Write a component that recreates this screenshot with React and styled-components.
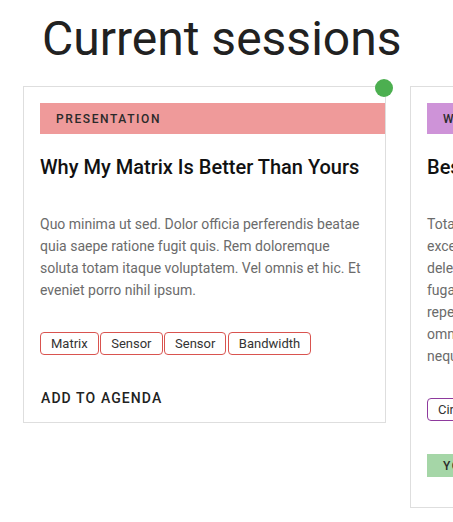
import React from "react";
import styled, { createGlobalStyle } from "styled-components";

const GlobalStyle = createGlobalStyle`
  html, body {
    margin: 0;
    padding: 0;
    background: #ffffff;
    overflow: hidden;
  }
  body {
    font-family: Roboto, "Liberation Sans", Arial, sans-serif;
    color: #212121;
  }
`;

const Page = styled.main`
  padding-top: 11px;
`;

const Heading = styled.h1`
  margin: 0 0 0 42px;
  font-size: 48px;
  line-height: 56px;
  font-weight: 400;
  color: #212121;
  white-space: nowrap;
`;

const Track = styled.section`
  display: flex;
  align-items: flex-start;
  gap: 24px;
  padding: 19px 0 0 23px;
`;

const Card = styled.article`
  position: relative;
  flex: 0 0 363px;
  box-sizing: border-box;
  border: 1px solid #dedede;
  padding: 16px;
  background: #fff;
`;

const Dot = styled.span`
  position: absolute;
  top: -8px;
  right: -8px;
  width: 18px;
  height: 18px;
  border-radius: 50%;
  background: #4caf50;
`;

const Band = styled.div`
  display: flex;
  align-items: center;
  height: 31px;
  margin-right: -16px;
  padding-left: 16px;
  background: ${(p) => p.$color};
  font-size: 12px;
  font-weight: 500;
  letter-spacing: 1.6px;
  text-transform: uppercase;
  color: #2a2a2a;
  white-space: nowrap;
`;

const Title = styled.h2`
  margin: 21px 0 0;
  font-size: 20px;
  line-height: 24px;
  font-weight: 500;
  color: #111;
  white-space: nowrap;
`;

const Description = styled.p`
  margin: 34px 0 0;
  font-size: 14px;
  line-height: 22px;
  color: #6b6b6b;
  white-space: pre-line;
`;

const Tags = styled.div`
  display: flex;
  flex-wrap: wrap;
  gap: 1.5px;
  margin-top: 31px;
`;

const Tag = styled.span`
  box-sizing: border-box;
  height: 23px;
  padding: 0 10px;
  border: 1px solid ${(p) => p.$color};
  border-radius: 4px;
  font-size: 13px;
  line-height: 21px;
  color: #333;
  white-space: nowrap;
`;

const Action = styled.button`
  display: block;
  margin: 35px 0 0;
  padding: 0 0 0 1px;
  border: 0;
  background: none;
  font-family: inherit;
  font-size: 14px;
  line-height: 16px;
  font-weight: 500;
  letter-spacing: 1.1px;
  text-transform: uppercase;
  color: #222;
  cursor: pointer;
`;

const Attending = styled.div`
  display: flex;
  align-items: center;
  height: 23px;
  margin: 33px 0 14px;
  padding-left: 16px;
  background: #a5d6a7;
  font-size: 12px;
  font-weight: 500;
  letter-spacing: 1.6px;
  text-transform: uppercase;
  color: #2a2a2a;
  white-space: nowrap;
`;

const sessions = [
  {
    type: "Presentation",
    color: "#ef9a9a",
    tagColor: "#d9534f",
    title: "Why My Matrix Is Better Than Yours",
    description: [
      "Quo minima ut sed. Dolor officia perferendis beatae",
      "quia saepe ratione fugit quis. Rem doloremque",
      "soluta totam itaque voluptatem. Vel omnis et hic. Et",
      "eveniet porro nihil ipsum.",
    ].join("\n"),
    tags: ["Matrix", "Sensor", "Sensor", "Bandwidth"],
    live: true,
    attending: false,
  },
  {
    type: "Workshop",
    color: "#ce93d8",
    tagColor: "#8e3a9d",
    title: "Best Practices For Circuit Design",
    description: [
      "Totam quia qui voluptas et sint ea dolorum amet",
      "excepturi quod et aut ullam iure ea sapiente. Vel",
      "deleniti possimus nostrum veritatis est magnam.",
      "fuga modi quidem magnam tempora ipsum. Qui sint",
      "repellendus et eum ut quas dolores. Sed et est",
      "omnis autem perspiciatis illum. Ut quis qui",
      "neque enim.",
    ].join("\n"),
    tags: ["Circuit"],
    live: false,
    attending: true,
  },
];

function SessionCard({ session }) {
  return (
    <Card>
      {session.live && <Dot />}
      <Band $color={session.color}>{session.type}</Band>
      <Title>{session.title}</Title>
      <Description>{session.description}</Description>
      <Tags>
        {session.tags.map((t, i) => (
          <Tag key={i} $color={session.tagColor}>
            {t}
          </Tag>
        ))}
      </Tags>
      {session.attending ? (
        <Attending>You're attending</Attending>
      ) : (
        <Action type="button">Add to agenda</Action>
      )}
    </Card>
  );
}

export default function App() {
  return (
    <Page>
      <GlobalStyle />
      <Heading>Current sessions</Heading>
      <Track>
        {sessions.map((s, i) => (
          <SessionCard key={i} session={s} />
        ))}
      </Track>
    </Page>
  );
}
